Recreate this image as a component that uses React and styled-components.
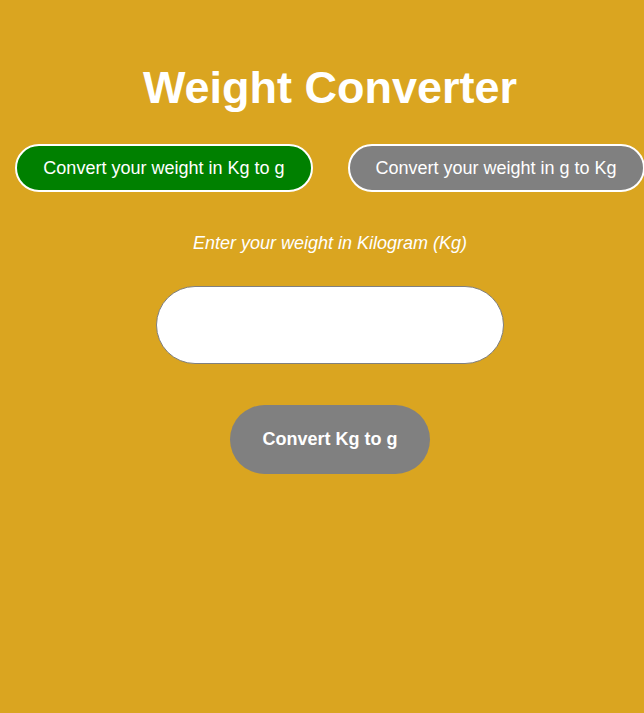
import React, { useState } from "react";
import styled, { createGlobalStyle } from "styled-components";

const GlobalStyle = createGlobalStyle`
  html, body {
    margin: 0;
    padding: 0;
    background-color: #daa520;
    font-family: "Liberation Sans", Arial, sans-serif;
    overflow: hidden;
  }
`;

const Page = styled.div`
  display: flex;
  flex-direction: column;
  align-items: center;
  width: 630px;
  min-height: 713px;
  margin-left: 15px;
  padding-top: 62px;
  box-sizing: border-box;
`;

const Title = styled.h1`
  margin: 0;
  font-size: 45px;
  line-height: 52px;
  font-weight: 700;
  color: #fff;
`;

const ModeRow = styled.div`
  display: flex;
  gap: 35px;
  margin-top: 30px;
`;

const ModeButton = styled.button`
  padding: 12px 26px 11px;
  border: 2px solid #fff;
  border-radius: 30px;
  background-color: ${({ $active }) => ($active ? "#008000" : "#808080")};
  color: #fff;
  font: 400 18px/21px "Liberation Sans", Arial, sans-serif;
  white-space: nowrap;
  cursor: pointer;
`;

const Label = styled.p`
  margin: 41px 0 0;
  font: italic 400 18px/21px "Liberation Sans", Arial, sans-serif;
  color: #fff;
`;

const WeightInput = styled.input`
  width: 348px;
  height: 78px;
  margin-top: 32px;
  padding: 0 30px;
  box-sizing: border-box;
  border: 1px solid #808080;
  border-radius: 39px;
  background: #fff;
  font: 400 18px "Liberation Sans", Arial, sans-serif;
  outline: none;
`;

const ConvertButton = styled.button`
  width: 200px;
  height: 69px;
  margin-top: 41px;
  border: none;
  border-radius: 35px;
  background-color: #808080;
  color: #fff;
  font: 700 18px/21px "Liberation Sans", Arial, sans-serif;
  cursor: pointer;
`;

export default function App() {
  const [mode, setMode] = useState("kg");
  const [value, setValue] = useState("");

  const isKg = mode === "kg";

  return (
    <>
      <GlobalStyle />
      <Page>
        <Title>Weight Converter</Title>
        <ModeRow>
          <ModeButton $active={isKg} onClick={() => setMode("kg")}>
            Convert your weight in Kg to g
          </ModeButton>
          <ModeButton $active={!isKg} onClick={() => setMode("g")}>
            Convert your weight in g to Kg
          </ModeButton>
        </ModeRow>
        <Label>
          {isKg ? "Enter your weight in Kilogram (Kg)" : "Enter your weight in gram (g)"}
        </Label>
        <WeightInput
          type="text"
          value={value}
          onChange={(e) => setValue(e.target.value)}
        />
        <ConvertButton>{isKg ? "Convert Kg to g" : "Convert g to Kg"}</ConvertButton>
      </Page>
    </>
  );
}
